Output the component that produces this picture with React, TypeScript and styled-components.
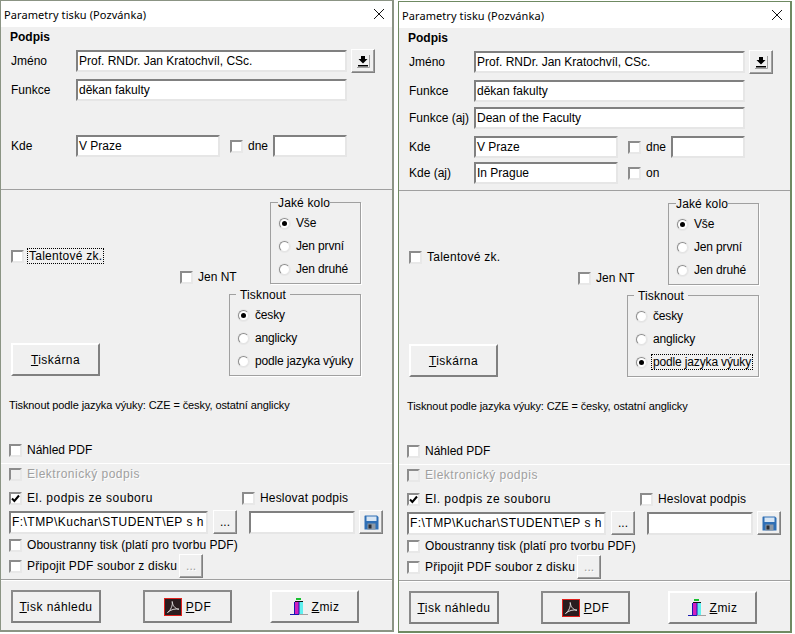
import React from 'react';
import styled, { createGlobalStyle } from 'styled-components';

const GlobalStyle = createGlobalStyle`
  html, body {
    margin: 0;
    padding: 0;
    background: #fff;
  }
  body {
    font-family: "Liberation Sans", Arial, sans-serif;
    font-size: 12px;
    color: #000;
  }
`;

const Desktop = styled.div`
  display: flex;
  align-items: flex-start;
  gap: 4px;
  width: 795px;
  height: 634px;
  overflow: hidden;
`;

const Window = styled.div<{ $drop: number; $edge: string }>`
  box-sizing: border-box;
  flex: none;
  width: 394px;
  height: 632px;
  margin-top: ${p => p.$drop}px;
  background: #f0f0f0;
  border: 1px solid ${p => p.$edge};
  border-right-width: 2px;
  border-bottom-width: 2px;
`;

const TitleBar = styled.div`
  display: flex;
  align-items: center;
  justify-content: space-between;
  box-sizing: border-box;
  height: 26px;
  padding: 0 7px 0 3px;
  background: #fff;
  font-family: "Noto Sans", sans-serif;
  font-size: 11px;
  letter-spacing: 0.08px;
`;

const SignSection = styled.div`
  box-sizing: border-box;
  height: 163px;
  padding: 3px 0 0 10px;
  border-bottom: 1px solid #a0a0a0;
`;

const Heading = styled.div`
  height: 14px;
  margin-left: -1px;
  line-height: 14px;
  font-weight: bold;
`;

const FieldRow = styled.div<{ $gap: number }>`
  display: flex;
  align-items: center;
  height: 22px;
  margin-top: ${p => p.$gap}px;
`;

const FieldLabel = styled.span`
  flex: none;
  width: 65px;
`;

const Field = styled.div<{ $width: number; $height?: number; $left?: number; $spread?: number }>`
  box-sizing: border-box;
  flex: none;
  width: ${p => p.$width}px;
  height: ${p => p.$height ?? 22}px;
  margin-left: ${p => p.$left ?? 0}px;
  padding-left: 1px;
  line-height: 19px;
  letter-spacing: ${p => p.$spread ?? 0}px;
  background: #fff;
  border: 2px solid;
  border-color: #808080 #e6e6e6 #e6e6e6 #808080;
  white-space: nowrap;
  overflow: hidden;
`;

const SmallButton = styled.div<{ $left: number; $muted?: boolean }>`
  display: flex;
  align-items: center;
  justify-content: center;
  box-sizing: border-box;
  flex: none;
  width: 24px;
  height: 24px;
  margin-left: ${p => p.$left}px;
  background: #f0f0f0;
  border: 1px solid;
  border-color: #fff #808080 #808080 #fff;
  box-shadow: inset -1px -1px 0 #a0a0a0;
  color: ${p => (p.$muted ? '#a0a0a0' : '#000')};
  text-shadow: ${p => (p.$muted ? '1px 1px 0 #fff' : 'none')};
`;

const CheckItem = styled.label<{ $left?: number; $top?: number; $disabled?: boolean; $spread?: number }>`
  display: inline-flex;
  align-items: center;
  flex: none;
  gap: 5px;
  height: 14px;
  margin-left: ${p => p.$left ?? 0}px;
  margin-top: ${p => p.$top ?? 0}px;
  white-space: nowrap;
  letter-spacing: ${p => p.$spread ?? 0}px;
  color: ${p => (p.$disabled ? '#a0a0a0' : '#000')};
  text-shadow: ${p => (p.$disabled ? '1px 1px 0 #fff' : 'none')};
`;

const CheckBox = styled.span<{ $disabled?: boolean }>`
  display: flex;
  align-items: center;
  justify-content: center;
  box-sizing: border-box;
  flex: none;
  width: 13px;
  height: 13px;
  background: ${p => (p.$disabled ? '#f0f0f0' : '#fff')};
  border: 2px solid;
  border-color: #8c8c8c #e8e8e8 #e8e8e8 #8c8c8c;
`;

const Focusable = styled.span<{ $focused?: boolean }>`
  padding: 0 1px;
  margin: 0 -1px;
  outline: ${p => (p.$focused ? '1px dotted #000' : 'none')};
  outline-offset: 0;
`;

const OptionSection = styled.div`
  box-sizing: border-box;
  height: 273px;
  padding: 5px 0 0 8px;
`;

const OptionArea = styled.div`
  display: flex;
  justify-content: space-between;
  height: 181px;
  padding: 0 31px 0 2px;
`;

const OptionLeft = styled.div`
  display: flex;
  flex-direction: column;
  align-items: flex-start;
  flex: none;
  width: 218px;
  padding-top: 54px;
  box-sizing: border-box;
`;

const OptionRight = styled.div`
  display: flex;
  flex-direction: column;
  align-items: flex-end;
  gap: 3px;
`;

const Group = styled.fieldset<{ $width: number }>`
  box-sizing: border-box;
  display: flex;
  flex-direction: column;
  gap: 9px;
  width: ${p => p.$width}px;
  height: 89px;
  margin: 0;
  padding: 7px 0 0 8px;
  border: 1px solid #a0a0a0;
  box-shadow: 1px 1px 0 #fff;
`;

const GroupTitle = styled.legend<{ $pad: number; $shift: number }>`
  position: relative;
  top: 1px;
  margin-left: ${p => p.$shift}px;
  padding: 0 ${p => p.$pad}px;
  line-height: 14px;
  letter-spacing: 0.15px;
`;

const RadioItem = styled.label`
  display: flex;
  align-items: center;
  gap: 6px;
  height: 14px;
  letter-spacing: -0.15px;
  white-space: nowrap;
`;

const RadioDot = styled.span<{ $on: boolean }>`
  display: flex;
  align-items: center;
  justify-content: center;
  box-sizing: border-box;
  flex: none;
  width: 11px;
  height: 11px;
  border-radius: 50%;
  background: #fff;
  border: 1px solid;
  border-color: #8c8c8c #e4e4e4 #e4e4e4 #8c8c8c;
  box-shadow: 0 0 0 1px #e8e8e8;

  &::after {
    content: '';
    display: ${p => (p.$on ? 'block' : 'none')};
    width: 5px;
    height: 5px;
    border-radius: 50%;
    background: #000;
  }
`;

const BigButton = styled.div<{ $framed?: boolean; $width?: number; $top?: number }>`
  display: flex;
  align-items: center;
  justify-content: center;
  gap: 4px;
  box-sizing: border-box;
  flex: none;
  width: ${p => p.$width ?? 89}px;
  height: 33px;
  margin-top: ${p => p.$top ?? 0}px;
  letter-spacing: 0.45px;
  background: #f0f0f0;
  border: 2px solid;
  border-color: ${p => (p.$framed ? '#8a8a8a' : '#fff')} #808080 #808080 ${p => (p.$framed ? '#8a8a8a' : '#fff')};
`;

const Note = styled.div`
  height: 14px;
  margin-top: 22px;
  line-height: 14px;
  font-size: 11px;
  letter-spacing: -0.1px;
`;

const PreviewRow = styled.div`
  display: flex;
  margin-top: 31px;
`;

const SignatureSection = styled.div`
  box-sizing: border-box;
  height: 117px;
  padding: 3px 0 0 8px;
  border-top: 1px solid #fff;
  border-bottom: 1px solid #a0a0a0;
`;

const Line = styled.div<{ $gap: number; $height?: number }>`
  display: flex;
  align-items: center;
  height: ${p => p.$height ?? 14}px;
  margin-top: ${p => p.$gap}px;
`;

const ActionBar = styled.div`
  display: grid;
  grid-template-columns: 132px 127px 89px;
  padding: 9px 0 0 10px;
  border-top: 1px solid #fff;
`;

const CloseIcon = () => (
  <svg width="12" height="12" viewBox="0 0 12 12">
    <path d="M1 1 L11 11 M11 1 L1 11" stroke="#111" strokeWidth="1" fill="none" />
  </svg>
);

const TickIcon = () => (
  <svg width="9" height="9" viewBox="0 0 9 9">
    <path d="M1 4.5 L3.4 7 L8 1.5" stroke="#000" strokeWidth="2" fill="none" />
  </svg>
);

const DownIcon = () => (
  <svg width="14" height="14" viewBox="0 0 14 14">
    <path d="M13.5 1 V13.5 H1" stroke="#a0a0a0" fill="none" />
    <path d="M5 2 H9 V5 H11.5 L7 9.5 L2.5 5 H5 Z" fill="#000" />
    <rect x="2" y="11" width="10" height="1.5" fill="#000" />
  </svg>
);

const SaveIcon = () => (
  <svg width="15" height="15" viewBox="0 0 15 15">
    <path d="M1 0.5 H13 L14.5 2 V14.5 H0.5 V1 Z" fill="#2f6fb5" />
    <rect x="2.5" y="1.5" width="10" height="4.5" fill="#d8e6f4" />
    <rect x="3.5" y="8.5" width="8" height="6" fill="#8d99a6" />
    <rect x="4.5" y="9.5" width="3" height="4" fill="#2b2f36" />
  </svg>
);

const PdfIcon = () => (
  <svg width="18" height="18" viewBox="0 0 18 18">
    <rect x="0.5" y="0.5" width="17" height="17" fill="#2a1c1e" stroke="#e0201c" />
    <path d="M3.5 14.5 C6.5 12.5 9 7.5 8.2 3.5 C8.6 7.5 11 11 15 11.2 C11.5 10.4 6.5 11.5 3.5 14.5 Z" fill="none" stroke="#d8d4d4" strokeWidth="1" />
  </svg>
);

const TowerIcon = () => (
  <svg width="18" height="18" viewBox="0 0 18 18">
    <rect x="6" y="0" width="5" height="2" fill="#18c030" />
    <rect x="5" y="3" width="8" height="1" fill="#111" />
    <rect x="5" y="4" width="4" height="12" fill="#d020c0" />
    <rect x="9" y="4" width="4" height="12" fill="#60f0f0" />
    <path d="M4.5 4 V16 M9 4 V16" stroke="#1818b0" />
    <path d="M0 16.5 H9" stroke="#1818b0" />
    <path d="M9 16.5 H18" stroke="#a0a0a0" />
  </svg>
);

function Check({ text, checked, disabled, focused, left, top, spread }: {
  text: string;
  checked?: boolean;
  disabled?: boolean;
  focused?: boolean;
  left?: number;
  top?: number;
  spread?: number;
}) {
  return (
    <CheckItem $left={left} $top={top} $disabled={disabled} $spread={spread}>
      <CheckBox $disabled={disabled}>{checked && <TickIcon />}</CheckBox>
      <Focusable $focused={focused}>{text}</Focusable>
    </CheckItem>
  );
}

function Radio({ text, on, focused }: { text: string; on?: boolean; focused?: boolean }) {
  return (
    <RadioItem>
      <RadioDot $on={!!on} />
      <Focusable $focused={focused}>{text}</Focusable>
    </RadioItem>
  );
}

function Dialog({ english, drop, edge }: { english: boolean; drop: number; edge: string }) {
  return (
    <Window $drop={drop} $edge={edge}>
      <TitleBar>
        <span>Parametry tisku (Pozvánka)</span>
        <CloseIcon />
      </TitleBar>

      <SignSection>
        <Heading>Podpis</Heading>
        <FieldRow $gap={6}>
          <FieldLabel>Jméno</FieldLabel>
          <Field $width={271}>Prof. RNDr. Jan Kratochvíl, CSc.</Field>
          <SmallButton $left={4}><DownIcon /></SmallButton>
        </FieldRow>
        <FieldRow $gap={7}>
          <FieldLabel>Funkce</FieldLabel>
          <Field $width={271}>děkan fakulty</Field>
        </FieldRow>
        {english && (
          <FieldRow $gap={5}>
            <FieldLabel>Funkce (aj)</FieldLabel>
            <Field $width={271}>Dean of the Faculty</Field>
          </FieldRow>
        )}
        <FieldRow $gap={english ? 7 : 34}>
          <FieldLabel>Kde</FieldLabel>
          <Field $width={144}>V Praze</Field>
          <Check text="dne" left={10} />
          <Field $width={74} $left={5} />
        </FieldRow>
        {english && (
          <FieldRow $gap={4}>
            <FieldLabel>Kde (aj)</FieldLabel>
            <Field $width={144}>In Prague</Field>
            <Check text="on" left={10} />
          </FieldRow>
        )}
      </SignSection>

      <OptionSection>
        <OptionArea>
          <OptionLeft>
            <Check text="Talentové zk." focused={!english} spread={0.25} />
            <Check text="Jen NT" left={169} top={7} />
            <BigButton $top={59}><span><u>T</u>iskárna</span></BigButton>
          </OptionLeft>
          <OptionRight>
            <Group $width={91}>
              <GroupTitle $pad={0} $shift={-1}>Jaké kolo</GroupTitle>
              <Radio text="Vše" on />
              <Radio text="Jen první" />
              <Radio text="Jen druhé" />
            </Group>
            <Group $width={132}>
              <GroupTitle $pad={4} $shift={-2}>Tisknout</GroupTitle>
              <Radio text="česky" on={!english} />
              <Radio text="anglicky" />
              <Radio text="podle jazyka výuky" on={english} focused={english} />
            </Group>
          </OptionRight>
        </OptionArea>
        <Note>Tisknout podle jazyka výuky: CZE = česky, ostatní anglicky</Note>
        <PreviewRow><Check text="Náhled PDF" /></PreviewRow>
      </OptionSection>

      <SignatureSection>
        <Line $gap={0}><Check text="Elektronický podpis" disabled spread={0.5} /></Line>
        <Line $gap={10}>
          <Check text="El. podpis ze souboru" checked spread={0.5} />
          <Check text="Heslovat podpis" left={89} spread={0.2} />
        </Line>
        <Line $gap={5} $height={24}>
          <Field $width={199} $height={23} $spread={0.45}>F:\TMP\Kuchar\STUDENT\EP s h</Field>
          <SmallButton $left={5}>...</SmallButton>
          <Field $width={106} $height={23} $left={12} />
          <SmallButton $left={4}><SaveIcon /></SmallButton>
        </Line>
        <Line $gap={4}><Check text="Oboustranny tisk (platí pro tvorbu PDF)" spread={0.05} /></Line>
        <Line $gap={7}>
          <Check text="Připojit PDF soubor z disku" spread={0.2} />
          <SmallButton $left={2} $muted>...</SmallButton>
        </Line>
      </SignatureSection>

      <ActionBar>
        <BigButton $framed $width={90}><span><u>T</u>isk náhledu</span></BigButton>
        <BigButton $framed><PdfIcon /><span><u>P</u>DF</span></BigButton>
        <BigButton><TowerIcon /><span><u>Z</u>miz</span></BigButton>
      </ActionBar>
    </Window>
  );
}

export default function App() {
  return (
    <>
      <GlobalStyle />
      <Desktop>
        <Dialog english={false} drop={0} edge="#8b9484" />
        <Dialog english drop={1} edge="#6f8a62" />
      </Desktop>
    </>
  );
}
